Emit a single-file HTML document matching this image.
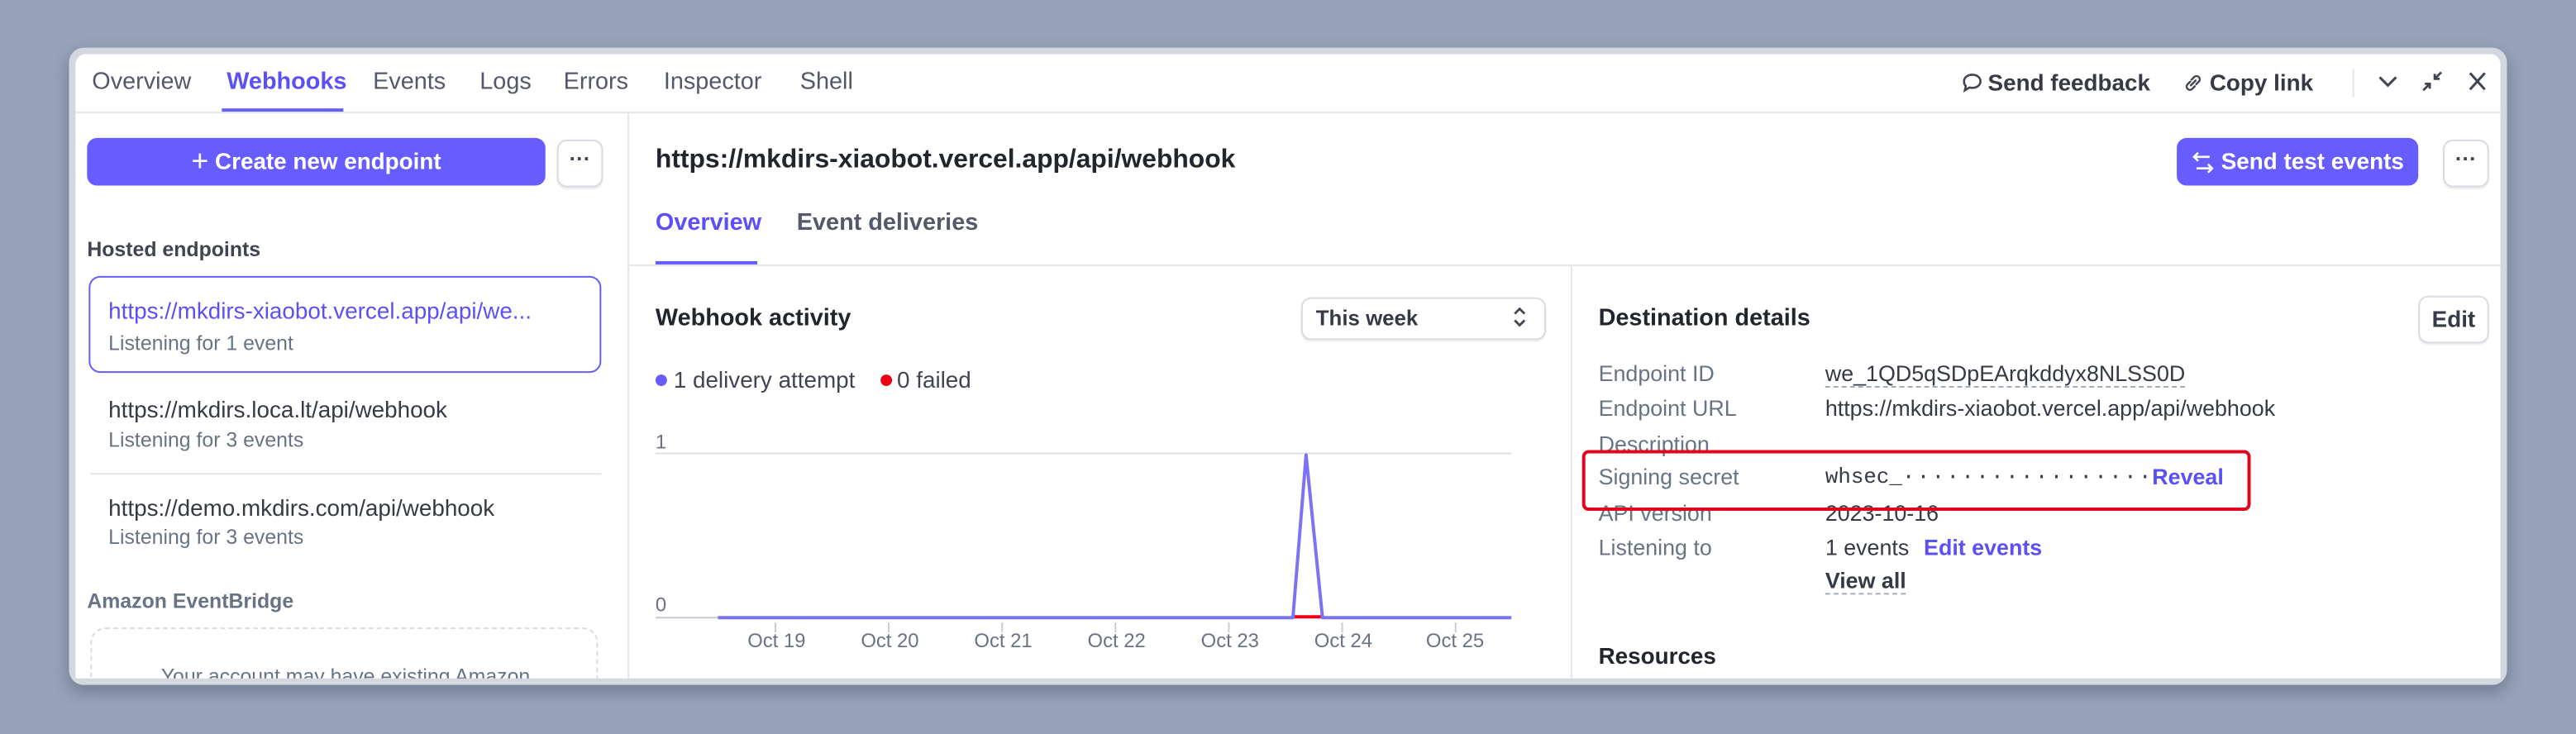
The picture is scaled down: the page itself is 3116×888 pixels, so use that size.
<!DOCTYPE html>
<html><head><meta charset="utf-8">
<style>
html,body{margin:0;padding:0;width:3116px;height:888px;overflow:hidden;background:#96a3b8;}
#s{position:absolute;left:0;top:0;width:1568px;height:447px;transform:scale(1.98724);transform-origin:0 0;font-family:"Liberation Sans",Arial,sans-serif;color:#353a44;}
.a{position:absolute;white-space:nowrap;}
.win{position:absolute;left:42px;top:29px;width:1484px;height:388px;background:#d3d8e0;border-radius:9px;box-shadow:0 4px 10px rgba(40,50,70,.35);}
.in{position:absolute;left:46px;top:33px;width:1476px;height:380px;background:#fff;border-radius:6px 6px 0 0;overflow:hidden;}
.nav{font-size:14.5px;color:#545969;top:9px;}
.hl{position:absolute;background:#e3e5ea;}
.btn{position:absolute;border-radius:6px;}
.pb{background:#675dff;color:#fff;font-weight:bold;font-size:14px;}
.wb{background:#fff;border:1px solid #d8dbe1;box-shadow:0 1px 1px rgba(0,0,0,.08);}
.lbl{font-size:13.5px;color:#687385;}
.val{font-size:13.5px;color:#353a44;}
.link{color:#5b4ff5;font-weight:bold;}
.xl{font-size:12px;color:#687385;top:350px;}
</style></head><body>
<div id="s">
<div class="win"></div>
<div class="in">
  <!-- top nav (coords relative to in: subtract 46,33) -->
  <div class="a nav" style="left:10px">Overview</div>
  <div class="a nav" style="left:92px;color:#5b4ff5;font-weight:bold">Webhooks</div>
  <div class="a nav" style="left:181px">Events</div>
  <div class="a nav" style="left:246px">Logs</div>
  <div class="a nav" style="left:297px">Errors</div>
  <div class="a nav" style="left:358px">Inspector</div>
  <div class="a nav" style="left:441px">Shell</div>
  <div class="a" style="left:89px;top:33px;width:74px;height:2px;background:#675dff"></div>
  <div class="hl" style="left:0;top:35px;width:1476px;height:1px"></div>
  <!-- right nav -->
  <svg class="a" style="left:1148px;top:11px" width="13" height="13" viewBox="0 0 13 13"><path d="M6.5 1.5c3 0 5 1.8 5 4s-2 4-5 4c-.6 0-1.2-.1-1.7-.2L2 11l.6-2.6C1.8 7.7 1.5 6.7 1.5 5.5c0-2.2 2-4 5-4z" fill="none" stroke="#414552" stroke-width="1.3"/></svg>
  <div class="a" style="left:1164px;top:9px;font-size:14px;font-weight:bold;color:#353a44">Send feedback</div>
  <svg class="a" style="left:1283px;top:11px" width="12" height="13" viewBox="0 0 12 13"><path d="M5 4.5l1.8-1.8a2 2 0 0 1 2.8 2.8L7.8 7.3M7 8.5L5.2 10.3a2 2 0 0 1-2.8-2.8L4.2 5.7M4.5 8l3-3" fill="none" stroke="#414552" stroke-width="1.2" stroke-linecap="round"/></svg>
  <div class="a" style="left:1299px;top:9px;font-size:14px;font-weight:bold;color:#353a44">Copy link</div>
  <div class="hl" style="left:1386px;top:9px;width:1px;height:17px"></div>
  <svg class="a" style="left:1401px;top:11px" width="13" height="12" viewBox="0 0 13 12"><path d="M1.5 3l5 5 5-5" fill="none" stroke="#414552" stroke-width="1.5"/></svg>
  <svg class="a" style="left:1428px;top:10px" width="13" height="13" viewBox="0 0 13 13"><path d="M12 1L8 5M8 2v3h3M1 12l4-4M2 8h3v3" fill="none" stroke="#414552" stroke-width="1.4"/></svg>
  <svg class="a" style="left:1456px;top:10px" width="12" height="13" viewBox="0 0 12 13"><path d="M1.5 1.5l9 10M10.5 1.5l-9 10" fill="none" stroke="#414552" stroke-width="1.5"/></svg>

  <!-- sidebar -->
  <div class="hl" style="left:336px;top:36px;width:1px;height:350px"></div>
  <div class="btn pb" style="left:7px;top:51px;width:279px;height:29px;line-height:29px;text-align:center"><span style="font-size:18px;font-weight:normal;vertical-align:-1px">+</span> Create new endpoint</div>
  <div class="btn wb" style="left:293px;top:52px;width:26px;height:27px;text-align:center;line-height:22px;font-weight:bold;font-size:13px;color:#414552">···</div>
  <div class="a" style="left:7px;top:112px;font-size:12.5px;font-weight:bold;color:#414552">Hosted endpoints</div>
  <div class="a" style="left:8px;top:135px;width:310px;height:57px;border:1px solid #675dff;border-radius:7px"></div>
  <div class="a" style="left:20px;top:148px;font-size:14px;color:#5b4ff5">https://mkdirs-xiaobot.vercel.app/api/we...</div>
  <div class="a" style="left:20px;top:169px;font-size:12.5px;color:#687385">Listening for 1 event</div>
  <div class="a" style="left:20px;top:208px;font-size:14px;color:#353a44">https://mkdirs.loca.lt/api/webhook</div>
  <div class="a" style="left:20px;top:228px;font-size:12.5px;color:#687385">Listening for 3 events</div>
  <div class="hl" style="left:9px;top:255px;width:311px;height:1px"></div>
  <div class="a" style="left:20px;top:268px;font-size:14px;color:#353a44">https://demo.mkdirs.com/api/webhook</div>
  <div class="a" style="left:20px;top:287px;font-size:12.5px;color:#687385">Listening for 3 events</div>
  <div class="a" style="left:7px;top:326px;font-size:12.5px;font-weight:bold;color:#687385">Amazon EventBridge</div>
  <div class="a" style="left:9px;top:349px;width:307px;height:60px;border:1.5px dashed #d8dbe1;border-radius:9px"></div>
  <div class="a" style="left:52px;top:372px;font-size:12.5px;color:#687385">Your account may have existing Amazon</div>

  <!-- main header -->
  <div class="a" style="left:353px;top:56px;font-size:16px;font-weight:bold;color:#21252c">https://mkdirs-xiaobot.vercel.app/api/webhook</div>
  <div class="btn pb" style="left:1279px;top:51px;width:147px;height:29px;line-height:29px;font-size:14px">
    <svg style="position:absolute;left:9px;top:8px" width="14" height="14" viewBox="0 0 14 14"><path d="M4 1L1.5 3.5 4 6M1.5 3.5H11M10 8l2.5 2.5L10 13M12.5 10.5H3" fill="none" stroke="#fff" stroke-width="1.3"/></svg>
    <span style="position:absolute;left:27px">Send test events</span></div>
  <div class="btn wb" style="left:1441px;top:52px;width:26px;height:27px;text-align:center;line-height:22px;font-weight:bold;font-size:13px;color:#414552">···</div>
  <div class="a" style="left:353px;top:95px;font-size:14.5px;font-weight:bold;color:#5b4ff5">Overview</div>
  <div class="a" style="left:439px;top:95px;font-size:14.5px;font-weight:bold;color:#545969">Event deliveries</div>
  <div class="a" style="left:353px;top:126px;width:62px;height:2px;background:#675dff"></div>
  <div class="hl" style="left:337px;top:128px;width:1139px;height:1px"></div>
  <div class="hl" style="left:910px;top:129px;width:1px;height:260px"></div>

  <!-- activity -->
  <div class="a" style="left:353px;top:153px;font-size:14.5px;font-weight:bold;color:#21252c">Webhook activity</div>
  <div class="btn wb" style="left:746px;top:148px;width:147px;height:24px"></div>
  <div class="a" style="left:755px;top:153px;font-size:13px;font-weight:bold;color:#353a44">This week</div>
  <svg class="a" style="left:874px;top:153px" width="10" height="14" viewBox="0 0 10 14"><path d="M2 5l3-3 3 3M2 9l3 3 3-3" fill="none" stroke="#414552" stroke-width="1.4"/></svg>
  <div class="a" style="left:353px;top:195px;width:7px;height:7px;border-radius:50%;background:#675dff"></div>
  <div class="a" style="left:364px;top:190px;font-size:14px;color:#414552">1 delivery attempt</div>
  <div class="a" style="left:490px;top:195px;width:7px;height:7px;border-radius:50%;background:#ed0017"></div>
  <div class="a" style="left:500px;top:190px;font-size:14px;color:#414552">0 failed</div>
  <div class="a" style="left:353px;top:229px;font-size:12px;color:#687385">1</div>
  <div class="a" style="left:353px;top:328px;font-size:12px;color:#687385">0</div>
  <svg class="a" style="left:0;top:0" width="910" height="380">
    <line x1="353" y1="243" x2="874" y2="243" stroke="#dcdfe4" stroke-width="1"/>
    <line x1="353" y1="343" x2="392" y2="343" stroke="#c9ccd2" stroke-width="1"/>
    <g stroke="#c9ccd2" stroke-width="1">
      <line x1="426" y1="346" x2="426" y2="352"/><line x1="495" y1="346" x2="495" y2="352"/><line x1="564" y1="346" x2="564" y2="352"/><line x1="633" y1="346" x2="633" y2="352"/><line x1="702" y1="346" x2="702" y2="352"/><line x1="771" y1="346" x2="771" y2="352"/><line x1="840" y1="346" x2="840" y2="352"/>
    </g>
    <line x1="742" y1="342.5" x2="758" y2="342.5" stroke="#ed0017" stroke-width="2"/>
    <polyline points="391,343 741,343 749,244 759,343 874,343" fill="none" stroke="#7c73f4" stroke-width="2" stroke-linejoin="round"/>
  </svg>
  <div class="a xl" style="left:409px">Oct 19</div>
  <div class="a xl" style="left:478px">Oct 20</div>
  <div class="a xl" style="left:547px">Oct 21</div>
  <div class="a xl" style="left:616px">Oct 22</div>
  <div class="a xl" style="left:685px">Oct 23</div>
  <div class="a xl" style="left:754px">Oct 24</div>
  <div class="a xl" style="left:822px">Oct 25</div>

  <!-- destination details -->
  <div class="a" style="left:927px;top:153px;font-size:14.5px;font-weight:bold;color:#21252c">Destination details</div>
  <div class="btn wb" style="left:1426px;top:147px;width:41px;height:27px;text-align:center;line-height:27px;font-size:14px;font-weight:bold;color:#353a44">Edit</div>
  <div class="a lbl" style="left:927px;top:187px">Endpoint ID</div>
  <div class="a val" style="left:1065px;top:187px;border-bottom:1px dashed #a3acba;line-height:15px">we_1QD5qSDpEArqkddyx8NLSS0D</div>
  <div class="a lbl" style="left:927px;top:208px">Endpoint URL</div>
  <div class="a val" style="left:1065px;top:208px">https://mkdirs-xiaobot.vercel.app/api/webhook</div>
  <div class="a lbl" style="left:927px;top:230px">Description</div>
  <div class="a lbl" style="left:927px;top:250px">Signing secret</div>
  <div class="a val" style="left:1065px;top:250px;font-family:'Liberation Mono',monospace;font-size:13px">whsec_<span style="letter-spacing:1.2px">·················</span></div>
  <div class="a link" style="left:1264px;top:250px;font-size:13.5px">Reveal</div>
  <div class="a lbl" style="left:927px;top:272px">API version</div>
  <div class="a val" style="left:1065px;top:272px">2023-10-16</div>
  <div class="a" style="left:917px;top:241px;width:403px;height:33px;border:2px solid #e0061d;border-radius:4px"></div>
  <div class="a lbl" style="left:927px;top:293px">Listening to</div>
  <div class="a val" style="left:1065px;top:293px">1 events</div>
  <div class="a link" style="left:1125px;top:293px;font-size:13.5px">Edit events</div>
  <div class="a val" style="left:1065px;top:313px;font-weight:bold;border-bottom:1px dashed #a3acba;line-height:15px">View all</div>
  <div class="a" style="left:927px;top:358px;font-size:14px;font-weight:bold;color:#21252c">Resources</div>
</div>
</div>
</body></html>
